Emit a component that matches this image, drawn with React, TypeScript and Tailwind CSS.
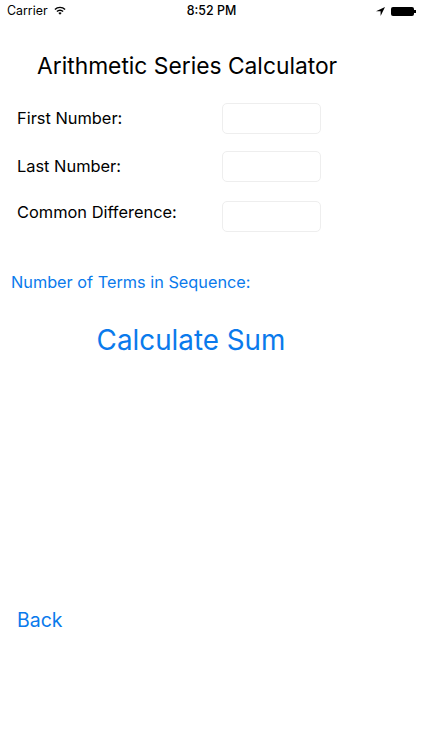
const font = { fontFamily: '"Inter", "Liberation Sans", sans-serif' };

function StatusBar() {
  return (
    <div className="flex h-[22px] items-center justify-between pt-[1px] pl-[7px] pr-[6px] text-[12.4px] text-black">
      <div className="flex w-[140px] items-center gap-[6px]">
        <span>Carrier</span>
        <svg width="12" height="9" viewBox="0 0 13 10" className="mb-[1px]">
          <path d="M0.3 3.4a8.7 8.7 0 0 1 12.4 0l-1.1 1.1a7.1 7.1 0 0 0-10.2 0z" fill="#000" />
          <path d="M2.5 5.6a5.6 5.6 0 0 1 8 0l-1.1 1.1a4 4 0 0 0-5.8 0z" fill="#000" />
          <path d="M4.7 7.8a2.6 2.6 0 0 1 3.6 0L6.5 9.7z" fill="#000" />
        </svg>
      </div>
      <span className="font-medium">8:52 PM</span>
      <div className="flex w-[140px] items-center justify-end gap-[6px]">
        <svg width="9" height="9" viewBox="0 0 9 9">
          <path d="M9 0L0 4.2h4.6V9z" fill="#000" />
        </svg>
        <div className="flex items-center">
          <div className="h-[9px] w-[23px] rounded-[2px] bg-black" />
          <div className="h-[3px] w-[2px] bg-black" />
        </div>
      </div>
    </div>
  );
}

function Field({ label, className, labelClass }: { label: string; className: string; labelClass?: string }) {
  return (
    <div className={`flex items-center justify-between pl-[17px] pr-[101px] ${className}`}>
      <span className={`text-[16.4px] leading-[20px] text-black ${labelClass ?? ""}`}>{label}</span>
      <div className="h-[31px] w-[99px] rounded-[5px] border border-[#eeeeee] bg-white" />
    </div>
  );
}

export default function App() {
  return (
    <div className="h-[750px] w-[422px] overflow-hidden bg-white" style={font}>
      <StatusBar />
      <h1 className="mt-[29px] pl-[37px] text-[22.8px] leading-[30px] font-normal text-black">
        Arithmetic Series Calculator
      </h1>
      <Field label="First Number:" className="mt-[22px]" labelClass="mb-[2px]" />
      <Field label="Last Number:" className="mt-[17px]" labelClass="mb-[2px]" />
      <Field label="Common Difference:" className="mt-[19px]" labelClass="mb-[10px]" />
      <p className="mt-[40px] pl-[11px] text-[16.3px] leading-[20px] text-[#0a7aec]">
        Number of Terms in Sequence:
      </p>
      <p className="mt-[30px] pr-[40px] text-center text-[27.8px] leading-[36px] text-[#0a7aec]">
        Calculate Sum
      </p>
      <p className="mt-[250px] pl-[17px] text-[19.5px] leading-[24px] text-[#0a7aec]">Back</p>
    </div>
  );
}
